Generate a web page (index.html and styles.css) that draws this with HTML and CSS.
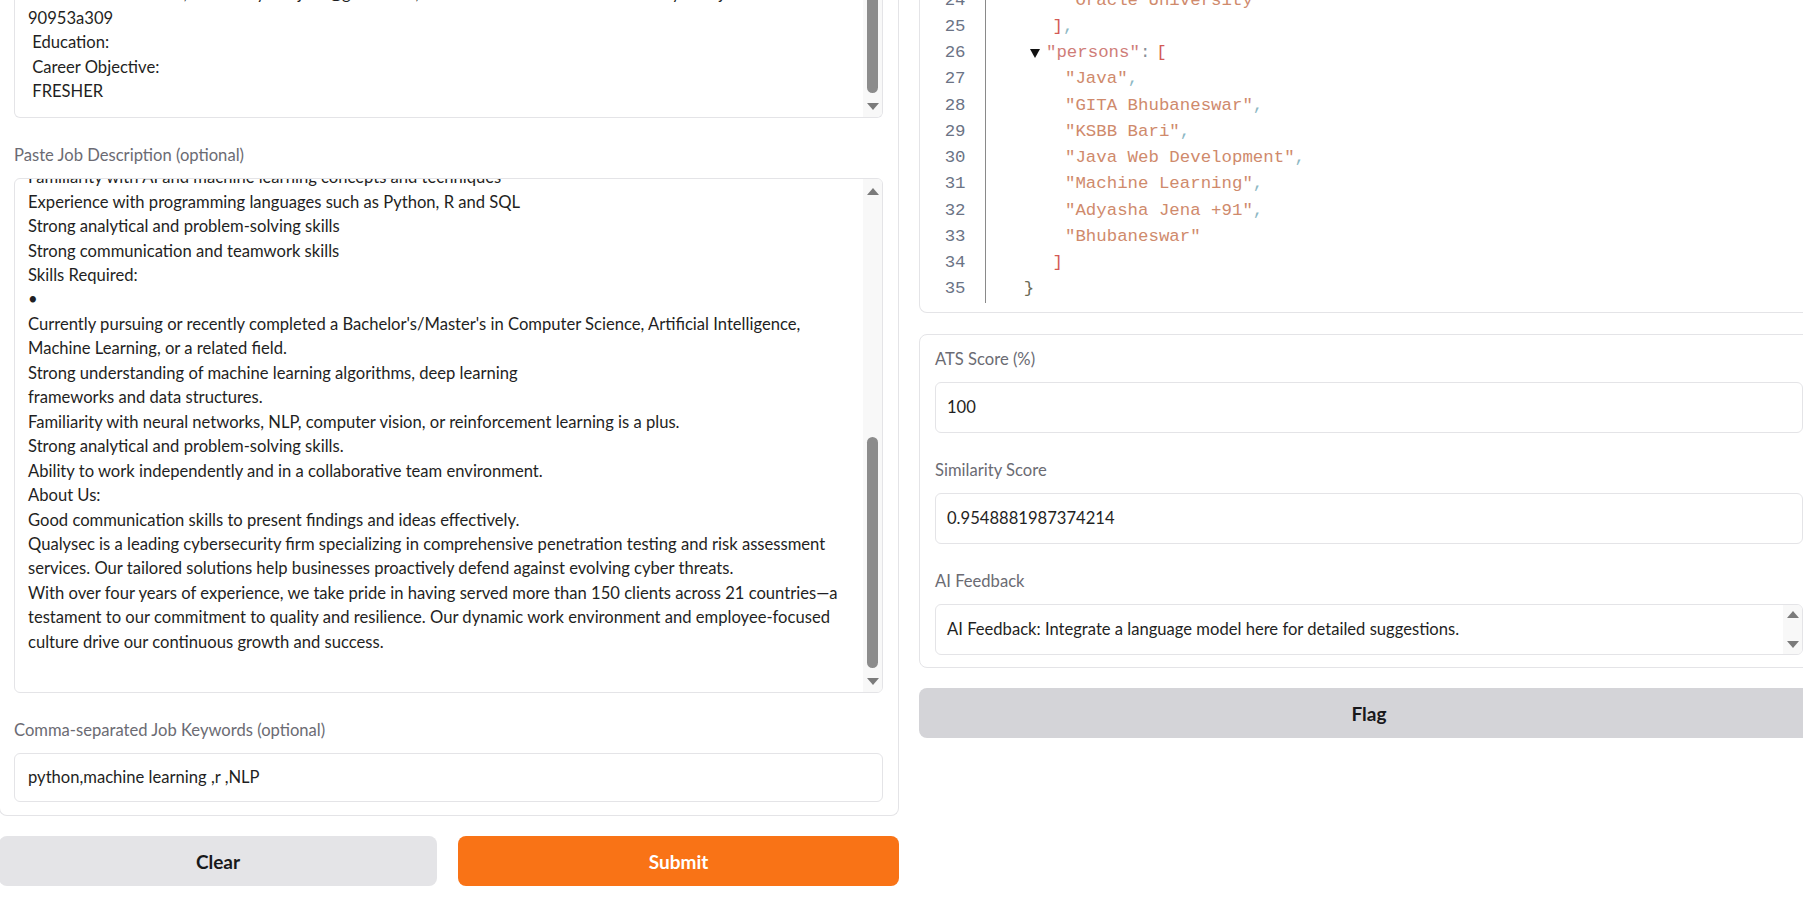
FILE: index.html
```html
<!DOCTYPE html>
<html lang="en">
<head>
<meta charset="utf-8">
<title>ATS Resume Checker</title>
<link rel="stylesheet" href="styles.css">
</head>
<body>
<div class="app">
  <div class="col col-left">
    <div class="panel panel-cut form-panel">
      <div class="textbox area resume">
        <div class="area-text resume-text">
          <div class="ln"> Phone: 7978000000, Email: adyashajena@gmail.com, LinkedIn: www.linkedin.com/in/adyasha-jena-</div>
          <div class="ln">90953a309</div>
          <div class="ln"> Education:</div>
          <div class="ln"> Career Objective:</div>
          <div class="ln"> FRESHER</div>
        </div>
        <div class="sbar">
          <div class="sb-track"><div class="sb-thumb thumb-resume"></div></div>
          <div class="sb-btn sb-down"><span class="tri-down"></span></div>
        </div>
      </div>

      <div class="label">Paste Job Description (optional)</div>
      <div class="textbox area job">
        <div class="area-text job-text">
          <div class="ln">Familiarity with AI and machine learning concepts and techniques</div>
          <div class="ln">Experience with programming languages such as Python, R and SQL</div>
          <div class="ln">Strong analytical and problem-solving skills</div>
          <div class="ln">Strong communication and teamwork skills</div>
          <div class="ln">Skills Required:</div>
          <div class="ln">•</div>
          <div class="ln">Currently pursuing or recently completed a Bachelor's/Master's in Computer Science, Artificial Intelligence,</div>
          <div class="ln">Machine Learning, or a related field.</div>
          <div class="ln">Strong understanding of machine learning algorithms, deep learning</div>
          <div class="ln">frameworks and data structures.</div>
          <div class="ln">Familiarity with neural networks, NLP, computer vision, or reinforcement learning is a plus.</div>
          <div class="ln">Strong analytical and problem-solving skills.</div>
          <div class="ln">Ability to work independently and in a collaborative team environment.</div>
          <div class="ln">About Us:</div>
          <div class="ln">Good communication skills to present findings and ideas effectively.</div>
          <div class="ln">Qualysec is a leading cybersecurity firm specializing in comprehensive penetration testing and risk assessment</div>
          <div class="ln">services. Our tailored solutions help businesses proactively defend against evolving cyber threats.</div>
          <div class="ln">With over four years of experience, we take pride in having served more than 150 clients across 21 countries—a</div>
          <div class="ln">testament to our commitment to quality and resilience. Our dynamic work environment and employee-focused</div>
          <div class="ln">culture drive our continuous growth and success.</div>
        </div>
        <div class="sbar">
          <div class="sb-btn sb-up-lg"><span class="tri-up"></span></div>
          <div class="sb-track"><div class="sb-thumb thumb-job"></div></div>
          <div class="sb-btn sb-down"><span class="tri-down"></span></div>
        </div>
      </div>

      <div class="label">Comma-separated Job Keywords (optional)</div>
      <div class="textbox input kw">python,machine learning ,r ,NLP</div>
    </div>

    <div class="btn-row">
      <button class="btn btn-secondary btn-clear">Clear</button>
      <button class="btn btn-primary">Submit</button>
    </div>
  </div>

  <div class="col col-right">
    <div class="panel panel-cut code-panel">
      <div class="code-lines">
        <div class="cl"><span class="num">24</span><span class="code ind-2"><span class="str">"Oracle University"</span></span></div>
        <div class="cl"><span class="num">25</span><span class="code ind-1"><span class="brk">]</span><span class="pun">,</span></span></div>
        <div class="cl"><span class="num">26</span><span class="code ind-tog"><span class="toggle"></span><span class="key">"persons"</span><span class="col-p">:</span><span class="brk brk-open">[</span></span></div>
        <div class="cl"><span class="num">27</span><span class="code ind-2"><span class="str">"Java"</span><span class="pun">,</span></span></div>
        <div class="cl"><span class="num">28</span><span class="code ind-2"><span class="str">"GITA Bhubaneswar"</span><span class="pun">,</span></span></div>
        <div class="cl"><span class="num">29</span><span class="code ind-2"><span class="str">"KSBB Bari"</span><span class="pun">,</span></span></div>
        <div class="cl"><span class="num">30</span><span class="code ind-2"><span class="str">"Java Web Development"</span><span class="pun">,</span></span></div>
        <div class="cl"><span class="num">31</span><span class="code ind-2"><span class="str">"Machine Learning"</span><span class="pun">,</span></span></div>
        <div class="cl"><span class="num">32</span><span class="code ind-2"><span class="str">"Adyasha Jena +91"</span><span class="pun">,</span></span></div>
        <div class="cl"><span class="num">33</span><span class="code ind-2"><span class="str">"Bhubaneswar"</span></span></div>
        <div class="cl"><span class="num">34</span><span class="code ind-1"><span class="brk">]</span></span></div>
        <div class="cl"><span class="num">35</span><span class="code ind-0"><span class="brace">}</span></span></div>
      </div>
    </div>

    <div class="panel out-panel">
      <div class="label label-first">ATS Score (%)</div>
      <div class="textbox input out">100</div>
      <div class="label">Similarity Score</div>
      <div class="textbox input out">0.9548881987374214</div>
      <div class="label">AI Feedback</div>
      <div class="textbox input out fb">
        <span class="fb-text">AI Feedback: Integrate a language model here for detailed suggestions.</span>
        <div class="sbar sbar-fb">
          <span class="tri-up"></span>
          <span class="tri-down"></span>
        </div>
      </div>
    </div>

    <button class="btn btn-flag">Flag</button>
  </div>
</div>
</body>
</html>
```
FILE: styles.css
```css
* { box-sizing: border-box; }

html, body { margin: 0; padding: 0; }

body {
  width: 1803px;
  height: 908px;
  overflow: hidden;
  background: #ffffff;
  font-family: Lato, "Noto Sans", "Liberation Sans", sans-serif;
  color: #1f1f23;
}

.app {
  display: flex;
  align-items: flex-start;
  gap: 20px;
  width: 1820px;
  margin-left: -1px;
}

.col {
  flex: none;
  width: 900px;
  display: flex;
  flex-direction: column;
}
.col-left { gap: 20px; }
.col-right { gap: 20px; }

/* panels */
.panel {
  background: #fff;
  border: 1px solid #e4e4e7;
  border-radius: 8px;
}
.panel-cut {
  border-top: 0;
  border-top-left-radius: 0;
  border-top-right-radius: 0;
}

.form-panel {
  display: flex;
  flex-direction: column;
  padding: 0 15px 13px 14px;
}

.label {
  font-size: 16.6px;
  line-height: 20px;
  color: #6b6b73;
  margin: 26.5px 0 13.5px;
}
.label-first { margin-top: 0; }

/* text boxes */
.textbox {
  background: #fff;
  border: 1px solid #e4e4e7;
  border-radius: 6px;
  font-size: 16.6px;
  line-height: 24.45px;
  color: #1f1f23;
}

.area {
  display: flex;
  overflow: hidden;
}
.area-text {
  flex: 1;
  min-width: 0;
  padding-left: 13px;
  overflow: hidden;
}
.ln { white-space: pre; }

.resume {
  height: 118px;
  border-top: 0;
  border-top-left-radius: 0;
  border-top-right-radius: 0;
}
.resume-text > .ln:first-child { margin-top: -18.8px; }

.job { height: 515px; }
.job-text > .ln:first-child { margin-top: -13.8px; }

.input {
  display: flex;
  align-items: center;
}
.kw {
  height: 49px;
  padding: 0 13px;
}

/* scrollbars */
.sbar {
  flex: none;
  width: 19px;
  background: #f8f8f8;
  display: flex;
  flex-direction: column;
}
.sb-track {
  flex: 1;
  position: relative;
}
.sb-thumb {
  position: absolute;
  left: 4px;
  width: 11px;
  background: #8c8c8c;
  border-radius: 6px;
}
.thumb-resume { top: -30px; bottom: 3px; }
.thumb-job { top: 234px; bottom: 3px; }

.sb-btn {
  flex: none;
  height: 21px;
  display: flex;
  align-items: center;
  justify-content: center;
}
.sb-up-lg { height: 24px; }

.tri-up, .tri-down {
  display: block;
  width: 0;
  height: 0;
  border-left: 6px solid transparent;
  border-right: 6px solid transparent;
}
.tri-up { border-bottom: 7px solid #7b7b7b; }
.tri-down { border-top: 7px solid #7b7b7b; }

/* buttons */
.btn-row {
  display: flex;
  gap: 21px;
}
.btn {
  flex: 1;
  height: 50px;
  border: 0;
  border-radius: 8px;
  font-family: Lato, "Noto Sans", "Liberation Sans", sans-serif;
  font-size: 19px;
  font-weight: 700;
  color: #18181b;
  padding: 0;
}
.btn-clear { flex: 0 0 438px; }
.btn-secondary { background: #e4e4e7; }
.btn-primary { background: #f97316; color: #ffffff; }
.btn-flag { flex: none; width: 100%; background: #d4d4d8; }

/* code / json panel */
.code-panel {
  height: 313px;
  overflow: hidden;
  margin-bottom: 1px;
}
.code-lines {
  margin-top: -12.3px;
  font-family: "Liberation Mono", "DejaVu Sans Mono", monospace;
  font-size: 17.4px;
  line-height: 26.23px;
}
.cl { display: flex; }
.num {
  flex: none;
  width: 66px;
  text-align: right;
  padding-right: 19.5px;
  border-right: 1px solid #8a8a8a;
  color: #6b7385;
}
.code {
  white-space: pre;
  display: flex;
  align-items: center;
}
.ind-0 { padding-left: 37.7px; }
.ind-1 { padding-left: 66.5px; }
.ind-2 { padding-left: 79px; }
.ind-tog { padding-left: 43.6px; }

.toggle {
  display: inline-block;
  width: 0;
  height: 0;
  border-left: 5px solid transparent;
  border-right: 5px solid transparent;
  border-top: 9px solid #111;
  margin-right: 6.4px;
}
.str { color: #cf8a6c; }
.key { color: #cf7d78; }
.brk { color: #d35a55; }
.brk-open { margin-left: 6px; }
.pun { color: #8db8c4; }
.col-p { color: #8a8f99; }
.brace { color: #6a6a55; }

/* outputs */
.out-panel {
  display: flex;
  flex-direction: column;
  padding: 13.5px 15px 12px 15px;
}
.out {
  height: 51px;
  padding: 0 11px;
}
.fb {
  padding-right: 0;
  overflow: hidden;
}
.fb-text { flex: 1; }
.sbar-fb {
  align-self: stretch;
  align-items: center;
  justify-content: space-between;
  padding: 6px 0 6px;
}
```
